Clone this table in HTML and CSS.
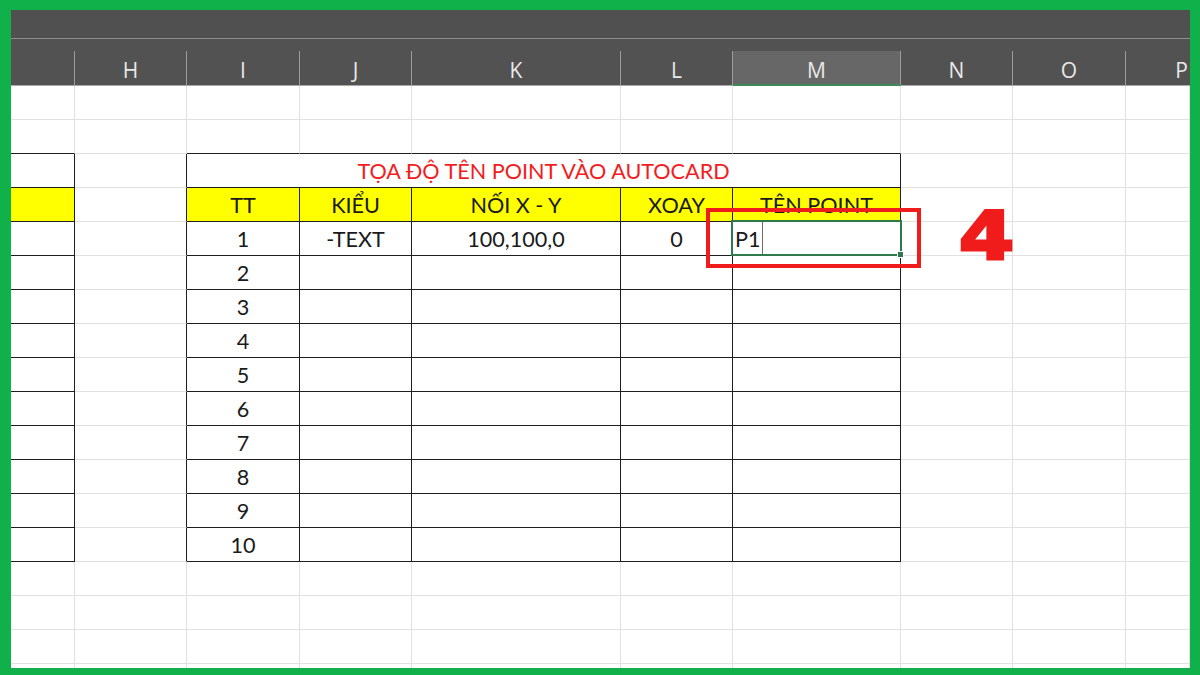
FILE: index.html
```html
<!DOCTYPE html>
<html>
<head>
<meta charset="utf-8">
<link rel="stylesheet" href="styles.css">
</head>
<body>
<div class="frame">
  <div class="topbar"></div>
  <div class="colheads">
    <div class="ch"></div>
    <div class="ch">H</div>
    <div class="ch">I</div>
    <div class="ch">J</div>
    <div class="ch">K</div>
    <div class="ch">L</div>
    <div class="ch active">M</div>
    <div class="ch">N</div>
    <div class="ch">O</div>
    <div class="ch last">P</div>
  </div>
  <div class="sheet">
    <!-- row 1 -->
    <div class="c"></div><div class="c"></div><div class="c"></div><div class="c"></div><div class="c"></div><div class="c"></div><div class="c"></div><div class="c"></div><div class="c"></div><div class="c"></div>
    <!-- row 2 -->
    <div class="c bb"></div><div class="c"></div><div class="c bb"></div><div class="c bb"></div><div class="c bb"></div><div class="c bb"></div><div class="c bb"></div><div class="c"></div><div class="c"></div><div class="c"></div>
    <!-- row 3 title -->
    <div class="c bb br"></div><div class="c br"></div><div class="c bb br title">TỌA ĐỘ TÊN POINT VÀO AUTOCARD</div><div class="c"></div><div class="c"></div><div class="c"></div>
    <!-- row 4 header -->
    <div class="c bb br y"></div><div class="c br"></div><div class="c bb br y">TT</div><div class="c bb br y">KIỂU</div><div class="c bb br y">NỐI X - Y</div><div class="c bb br y">XOAY</div><div class="c bb br y">TÊN POINT</div><div class="c"></div><div class="c"></div><div class="c"></div>
    <!-- data rows -->
    <div class="c bb br"></div><div class="c br"></div><div class="c bb br">1</div><div class="c bb br">-TEXT</div><div class="c bb br">100,100,0</div><div class="c bb br">0</div><div class="c bb br sel"><span class="edit">P1</span></div><div class="c"></div><div class="c"></div><div class="c"></div>
    <div class="c bb br"></div><div class="c br"></div><div class="c bb br">2</div><div class="c bb br"></div><div class="c bb br"></div><div class="c bb br"></div><div class="c bb br"></div><div class="c"></div><div class="c"></div><div class="c"></div>
    <div class="c bb br"></div><div class="c br"></div><div class="c bb br">3</div><div class="c bb br"></div><div class="c bb br"></div><div class="c bb br"></div><div class="c bb br"></div><div class="c"></div><div class="c"></div><div class="c"></div>
    <div class="c bb br"></div><div class="c br"></div><div class="c bb br">4</div><div class="c bb br"></div><div class="c bb br"></div><div class="c bb br"></div><div class="c bb br"></div><div class="c"></div><div class="c"></div><div class="c"></div>
    <div class="c bb br"></div><div class="c br"></div><div class="c bb br">5</div><div class="c bb br"></div><div class="c bb br"></div><div class="c bb br"></div><div class="c bb br"></div><div class="c"></div><div class="c"></div><div class="c"></div>
    <div class="c bb br"></div><div class="c br"></div><div class="c bb br">6</div><div class="c bb br"></div><div class="c bb br"></div><div class="c bb br"></div><div class="c bb br"></div><div class="c"></div><div class="c"></div><div class="c"></div>
    <div class="c bb br"></div><div class="c br"></div><div class="c bb br">7</div><div class="c bb br"></div><div class="c bb br"></div><div class="c bb br"></div><div class="c bb br"></div><div class="c"></div><div class="c"></div><div class="c"></div>
    <div class="c bb br"></div><div class="c br"></div><div class="c bb br">8</div><div class="c bb br"></div><div class="c bb br"></div><div class="c bb br"></div><div class="c bb br"></div><div class="c"></div><div class="c"></div><div class="c"></div>
    <div class="c bb br"></div><div class="c br"></div><div class="c bb br">9</div><div class="c bb br"></div><div class="c bb br"></div><div class="c bb br"></div><div class="c bb br"></div><div class="c"></div><div class="c"></div><div class="c"></div>
    <div class="c bb br"></div><div class="c br"></div><div class="c bb br">10</div><div class="c bb br"></div><div class="c bb br"></div><div class="c bb br"></div><div class="c bb br"></div><div class="c"></div><div class="c"></div><div class="c"></div>
    <!-- empty rows -->
    <div class="c"></div><div class="c"></div><div class="c"></div><div class="c"></div><div class="c"></div><div class="c"></div><div class="c"></div><div class="c"></div><div class="c"></div><div class="c"></div>
    <div class="c"></div><div class="c"></div><div class="c"></div><div class="c"></div><div class="c"></div><div class="c"></div><div class="c"></div><div class="c"></div><div class="c"></div><div class="c"></div>
    <div class="c"></div><div class="c"></div><div class="c"></div><div class="c"></div><div class="c"></div><div class="c"></div><div class="c"></div><div class="c"></div><div class="c"></div><div class="c"></div>
    <div class="c"></div><div class="c"></div><div class="c"></div><div class="c"></div><div class="c"></div><div class="c"></div><div class="c"></div><div class="c"></div><div class="c"></div><div class="c"></div>
  </div>
</div>
<div class="callout"></div>
<div class="step">4</div>
</body>
</html>
```

FILE: styles.css
```css
html, body {
  margin: 0;
  padding: 0;
}
body {
  position: relative;
  width: 1200px;
  height: 675px;
  overflow: hidden;
  font-family: Lato, "Liberation Sans", sans-serif;
}
.frame {
  box-sizing: border-box;
  width: 1200px;
  height: 675px;
  border-style: solid;
  border-color: #10b04a;
  border-width: 10px 10px 7px 11px;
  background: #ffffff;
  overflow: hidden;
  display: flex;
  flex-direction: column;
}
.topbar {
  height: 28px;
  flex: none;
  background: #505050;
  border-bottom: 1px solid #8e8e8e;
}
.colheads {
  flex: none;
  box-sizing: border-box;
  height: 47px;
  padding-top: 12px;
  background: #525252;
  display: grid;
  grid-template-columns: 64px 112px 113px 112px 209px 112px 168px 112px 113px 1fr;
}
.ch {
  box-sizing: border-box;
  height: 35px;
  border-right: 1px solid #9c9c9c;
  border-bottom: 1px solid #a8a8a8;
  color: #e8e8e8;
  font-family: "Open Sans", "Liberation Sans", sans-serif;
  font-size: 21px;
  line-height: 35px;
  padding-top: 2px;
  text-align: center;
}
.ch.last {
  border-right: none;
  text-align: right;
  padding-right: 2px;
}
.ch.active {
  background: #676767;
  border-bottom: 2px solid #3c8a5a;
}
.sheet {
  flex: none;
  display: grid;
  grid-template-columns: 64px 112px 113px 112px 209px 112px 168px 112px 113px 1fr;
  grid-auto-rows: 34px;
}
.c {
  box-sizing: border-box;
  border-right: 1px solid #e1e1e1;
  border-bottom: 1px solid #e1e1e1;
  font-size: 21.6px;
  line-height: 35px;
  color: #1a1a1a;
  text-align: center;
  white-space: nowrap;
  position: relative;
}
.c.bb {
  border-bottom-color: #1e1e1e;
}
.c.br {
  border-right-color: #1e1e1e;
}
.c.y {
  background: #ffff00;
}
.c.title {
  grid-column: span 5;
  color: #f21d22;
}
.c.sel {
  text-align: left;
  padding-left: 2px;
}
.c.sel::after {
  content: "";
  position: absolute;
  left: -2px;
  top: -2px;
  right: -2px;
  bottom: -1px;
  border: 2px solid #2f7a4c;
}
.c.sel::before {
  content: "";
  position: absolute;
  right: -4px;
  bottom: -3px;
  width: 5px;
  height: 5px;
  background: #2f7a4c;
  border: 1px solid #ffffff;
  z-index: 2;
}
.edit {
  display: inline-block;
  height: 33px;
  padding-right: 1px;
  border-right: 1px solid #6a6a6a;
}
.callout {
  position: absolute;
  left: 706px;
  top: 208px;
  width: 215px;
  height: 60px;
  box-sizing: border-box;
  border: 4px solid #f01c1c;
}
.step {
  position: absolute;
  left: 959px;
  top: 197px;
  font-family: "DejaVu Sans", sans-serif;
  font-weight: bold;
  font-size: 65px;
  line-height: 80px;
  color: #f01c1c;
  -webkit-text-stroke: 3px #f01c1c;
  transform: scaleX(1.22);
  transform-origin: left center;
}
```
